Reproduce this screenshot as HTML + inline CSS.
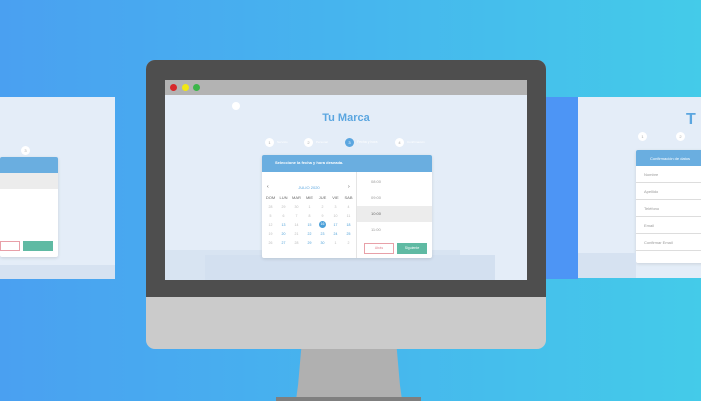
<!DOCTYPE html>
<html><head><meta charset="utf-8"><style>
*{margin:0;padding:0;box-sizing:border-box}
body{width:701px;height:401px;overflow:hidden;position:relative;font-family:"Liberation Sans",sans-serif;background:linear-gradient(90deg,#4aa0f1 0%,#46b5ee 50%,#44cbe9 100%)}
.abs{position:absolute}
.panel{background:#e4edf8}
.card{background:#fff;box-shadow:0 1px 3px rgba(0,0,0,.12);border-radius:2px;overflow:hidden}
.hdr{background:#6aaee0;color:#fff;font-size:4px;font-weight:bold}
.t{font-size:4px;color:#999}
.cal td{font-size:3.5px;color:#bbb;text-align:center;height:9px;width:13px}
.cal td.b{color:#4a9fd8}
.cal th{font-size:4px;color:#666;font-weight:normal;height:9px}
.circ{position:absolute;width:9px;height:9px;border-radius:50%;background:#fff;font-size:4px;color:#aaa;text-align:center;line-height:9px}
</style></head><body>
<div class="abs" style="left:546px;top:97px;width:32px;height:182px;background:#4d95f5"></div>
<div class="abs panel" style="left:0;top:97px;width:115px;height:182px">
 <div class="circ" style="left:21px;top:49px">3</div>
 <div class="card abs" style="left:0;top:60px;width:58px;height:100px">
  <div class="hdr" style="height:16px"></div>
  <div style="height:16px;background:#ececec"></div>
  <div class="abs" style="left:0;top:84px;width:20px;height:10px;border:1px solid #e8a0a8"></div>
  <div class="abs" style="left:23px;top:84px;width:30px;height:10px;background:#5fbaa3"></div>
 </div>
 <div class="abs" style="left:0;top:168px;width:115px;height:14px;background:#d6e2f1"></div>
</div>
<div class="abs panel" style="left:578px;top:97px;width:123px;height:181px">
 <div class="abs" style="left:108px;top:14px;font-size:16px;color:#5ba6e0;font-weight:bold">T</div>
 <div class="circ" style="left:60px;top:35px">1</div><div class="circ" style="left:98px;top:35px">2</div>
 <div class="card abs" style="left:58px;top:53px;width:70px;height:113px">
  <div class="hdr" style="height:16px;padding:6px 0 0 14px;font-weight:normal">Confirmación de datos</div>
  <div class="t" style="padding:6px 8px;border-bottom:1px solid #ddd;height:17px">Nombre</div>
  <div class="t" style="padding:6px 8px;border-bottom:1px solid #ddd;height:17px">Apellido</div>
  <div class="t" style="padding:6px 8px;border-bottom:1px solid #ddd;height:17px">Teléfono</div>
  <div class="t" style="padding:6px 8px;border-bottom:1px solid #ddd;height:17px">Email</div>
  <div class="t" style="padding:6px 8px;border-bottom:1px solid #ddd;height:17px">Confirmar Email</div>
 </div>
 <div class="abs" style="left:0;top:156px;width:58px;height:25px;background:#d6e2f1"></div>
</div>
<div class="abs" style="left:296px;top:348px;width:106px;height:52px;background:#b0b0b0;clip-path:polygon(5% 0,95% 0,98% 70%,100% 100%,0 100%,2% 70%)"></div>
<div class="abs" style="left:276px;top:397px;width:145px;height:4px;background:#7f7f7f"></div>
<div class="abs" style="left:146px;top:60px;width:400px;height:289px;background:#cbcbcb;border-radius:9px"></div>
<div class="abs" style="left:146px;top:60px;width:400px;height:237px;background:#4e4e4e;border-radius:9px 9px 0 0"></div>
<div class="abs" style="left:165px;top:80px;width:362px;height:15px;background:#b3b3b3"></div>
<div class="abs" style="left:170px;top:84px;width:7px;height:7px;border-radius:50%;background:#d7272b"></div>
<div class="abs" style="left:182px;top:84px;width:7px;height:7px;border-radius:50%;background:#f1e714"></div>
<div class="abs" style="left:193px;top:84px;width:7px;height:7px;border-radius:50%;background:#3bb54a"></div>
<div class="abs panel" style="left:165px;top:95px;width:362px;height:185px;overflow:hidden">
 <div class="abs" style="left:67px;top:7px;width:8px;height:8px;border-radius:50%;background:#fff"></div>
 <div class="abs" style="left:-5px;top:155px;width:300px;height:40px;background:#d8e4f2"></div>
 <div class="abs" style="left:40px;top:160px;width:290px;height:30px;background:#d3e0f0"></div>
 <div class="abs" style="left:0;top:17px;width:362px;text-align:center;font-size:11px;font-weight:bold;color:#5ba6e0">Tu Marca</div>
 <div class="circ" style="left:100px;top:43px">1</div><div class="abs t" style="left:112px;top:45px;font-size:3px;color:#fff">Servicio</div>
 <div class="circ" style="left:139px;top:43px">2</div><div class="abs t" style="left:151px;top:45px;font-size:3px;color:#fff">Personal</div>
 <div class="circ" style="left:180px;top:43px;background:#5ba6e0;color:#fff">3</div><div class="abs" style="left:192px;top:45px;font-size:3.5px;color:#fff">Fecha y hora</div>
 <div class="circ" style="left:230px;top:43px">4</div><div class="abs t" style="left:242px;top:45px;font-size:3px;color:#fff">Confirmación</div>
</div>
<div class="card abs" style="left:262px;top:155px;width:170px;height:103px">
 <div class="hdr" style="height:17px;padding:5px 0 0 13px;font-size:4px">Seleccione la fecha y hora deseada.</div>
 <div class="abs" style="left:94px;top:17px;width:1px;height:86px;background:#e5e5e5"></div>
 <div class="abs" style="left:5px;top:29px;font-size:5px;color:#444">‹</div>
 <div class="abs" style="left:86px;top:29px;font-size:5px;color:#444">›</div>
 <div class="abs" style="left:0;top:30px;width:94px;text-align:center;font-size:4px;color:#5ba6e0">JULIO 2020</div>
 <table class="cal abs" style="left:2px;top:38px;border-collapse:collapse">
  <tr><th>DOM</th><th>LUN</th><th>MAR</th><th>MIE</th><th>JUE</th><th>VIE</th><th>SAB</th></tr>
  <tr><td>28</td><td>29</td><td>30</td><td>1</td><td>2</td><td>3</td><td>4</td></tr>
  <tr><td>5</td><td>6</td><td>7</td><td>8</td><td>9</td><td>10</td><td>11</td></tr>
  <tr><td>12</td><td class="b">13</td><td>14</td><td class="b">15</td><td><span style="display:inline-block;width:7px;height:7px;border-radius:50%;background:#4a9fd8;color:#fff;line-height:7px">16</span></td><td class="b">17</td><td class="b">18</td></tr>
  <tr><td>19</td><td class="b">20</td><td>21</td><td class="b">22</td><td class="b">23</td><td class="b">24</td><td class="b">25</td></tr>
  <tr><td>26</td><td class="b">27</td><td>28</td><td class="b">29</td><td class="b">30</td><td>1</td><td>2</td></tr>
 </table>
 <div class="abs t" style="left:109px;top:24px">08:00</div>
 <div class="abs t" style="left:109px;top:40px">09:00</div>
 <div class="abs" style="left:95px;top:51px;width:75px;height:16px;background:#ececec"></div>
 <div class="abs t" style="left:109px;top:56px;color:#666">10:00</div>
 <div class="abs t" style="left:109px;top:72px">11:00</div>
 <div class="abs" style="left:102px;top:88px;width:30px;height:11px;border:1px solid #e8a0a8;font-size:3.5px;color:#e08a95;text-align:center;line-height:9px">Atrás</div>
 <div class="abs" style="left:135px;top:88px;width:30px;height:11px;background:#5fbaa3;font-size:3.5px;color:#fff;text-align:center;line-height:11px">Siguiente</div>
</div>
</body></html>
